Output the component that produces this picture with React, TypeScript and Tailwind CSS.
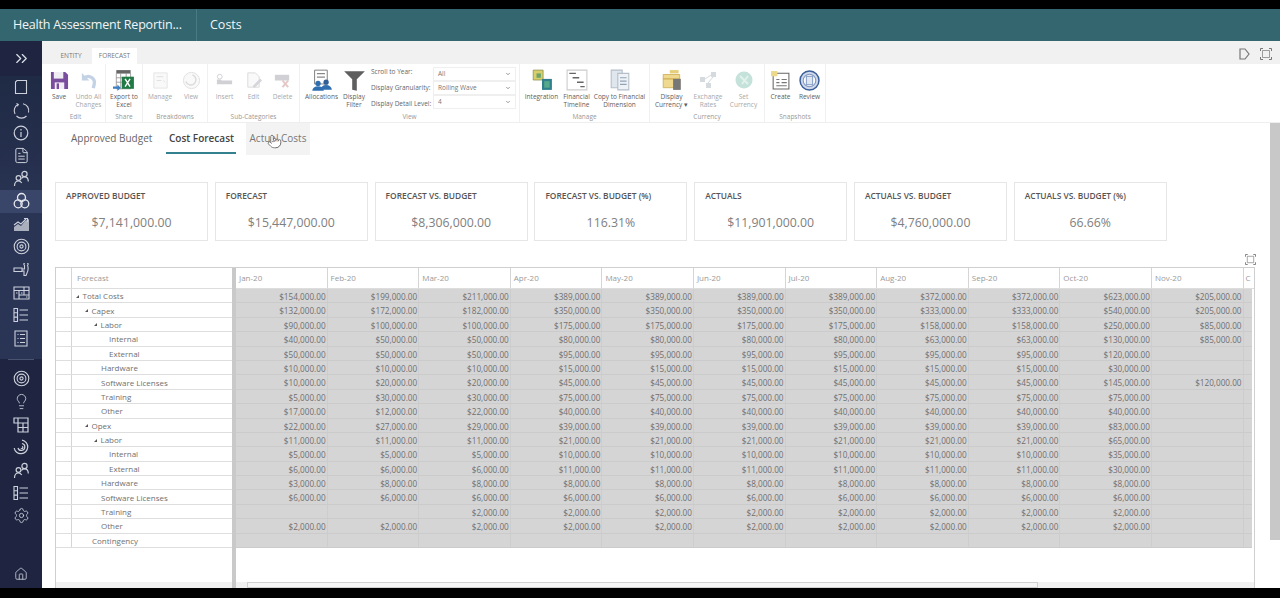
import {
  ChevronsRight,
  Lightbulb,
  Settings,
  Home,
  Pointer,
  ChevronDown,
  FileText,
} from 'lucide-react';
import type { ReactNode } from 'react';

const FONT = "font-['Open_Sans','Noto_Sans',sans-serif]";

const cards = [
  { label: 'APPROVED BUDGET', value: '$7,141,000.00' },
  { label: 'FORECAST', value: '$15,447,000.00' },
  { label: 'FORECAST VS. BUDGET', value: '$8,306,000.00' },
  { label: 'FORECAST VS. BUDGET (%)', value: '116.31%' },
  { label: 'ACTUALS', value: '$11,901,000.00' },
  { label: 'ACTUALS VS. BUDGET', value: '$4,760,000.00' },
  { label: 'ACTUALS VS. BUDGET (%)', value: '66.66%' },
];

const months = ['Jan-20', 'Feb-20', 'Mar-20', 'Apr-20', 'May-20', 'Jun-20', 'Jul-20', 'Aug-20', 'Sep-20', 'Oct-20', 'Nov-20'];

// values in thousands, 0 = empty cell
const rows: { name: string; indent: string; open?: boolean; v: number[] }[] = [
  { name: 'Total Costs', indent: 'pl-[4px]', open: true, v: [154, 199, 211, 389, 389, 389, 389, 372, 372, 623, 205] },
  { name: 'Capex', indent: 'pl-[13px]', open: true, v: [132, 172, 182, 350, 350, 350, 350, 333, 333, 540, 205] },
  { name: 'Labor', indent: 'pl-[22px]', open: true, v: [90, 100, 100, 175, 175, 175, 175, 158, 158, 250, 85] },
  { name: 'Internal', indent: 'pl-[37px]', v: [40, 50, 50, 80, 80, 80, 80, 63, 63, 130, 85] },
  { name: 'External', indent: 'pl-[37px]', v: [50, 50, 50, 95, 95, 95, 95, 95, 95, 120, 0] },
  { name: 'Hardware', indent: 'pl-[29px]', v: [10, 10, 10, 15, 15, 15, 15, 15, 15, 30, 0] },
  { name: 'Software Licenses', indent: 'pl-[29px]', v: [10, 20, 20, 45, 45, 45, 45, 45, 45, 145, 120] },
  { name: 'Training', indent: 'pl-[29px]', v: [5, 30, 30, 75, 75, 75, 75, 75, 75, 75, 0] },
  { name: 'Other', indent: 'pl-[29px]', v: [17, 12, 22, 40, 40, 40, 40, 40, 40, 40, 0] },
  { name: 'Opex', indent: 'pl-[13px]', open: true, v: [22, 27, 29, 39, 39, 39, 39, 39, 39, 83, 0] },
  { name: 'Labor', indent: 'pl-[22px]', open: true, v: [11, 11, 11, 21, 21, 21, 21, 21, 21, 65, 0] },
  { name: 'Internal', indent: 'pl-[37px]', v: [5, 5, 5, 10, 10, 10, 10, 10, 10, 35, 0] },
  { name: 'External', indent: 'pl-[37px]', v: [6, 6, 6, 11, 11, 11, 11, 11, 11, 30, 0] },
  { name: 'Hardware', indent: 'pl-[29px]', v: [3, 8, 8, 8, 8, 8, 8, 8, 8, 8, 0] },
  { name: 'Software Licenses', indent: 'pl-[29px]', v: [6, 6, 6, 6, 6, 6, 6, 6, 6, 6, 0] },
  { name: 'Training', indent: 'pl-[29px]', v: [0, 0, 2, 2, 2, 2, 2, 2, 2, 2, 0] },
  { name: 'Other', indent: 'pl-[29px]', v: [2, 2, 2, 2, 2, 2, 2, 2, 2, 2, 0] },
  { name: 'Contingency', indent: 'pl-[20px]', v: [0, 0, 0, 0, 0, 0, 0, 0, 0, 0, 0] },
];

function Svg({ children, size = 20 }: { children: ReactNode; size?: number }) {
  return (
    <svg width={size} height={size} viewBox="0 0 20 20" fill="none">
      {children}
    </svg>
  );
}

const STROKE = '#ccd1dc';

function SideIcon({ children, active }: { children: ReactNode; active?: boolean }) {
  return <div className={`h-[22.8px] flex items-center justify-center ${active ? 'bg-[#3a4669]' : ''}`}>{children}</div>;
}

function TargetIcon() {
  return (
    <svg width="17" height="17" viewBox="0 0 17 17" fill="none" stroke={STROKE} strokeWidth="1.1">
      <circle cx="8.5" cy="8.5" r="7.3" />
      <circle cx="8.5" cy="8.5" r="4.4" />
      <circle cx="8.5" cy="8.5" r="1.6" />
    </svg>
  );
}

function PeopleIcon() {
  return (
    <svg width="17" height="17" viewBox="0 0 17 17" fill="none" stroke={STROKE} strokeWidth="1.2">
      <circle cx="11.5" cy="4" r="2.6" />
      <circle cx="5.5" cy="8" r="2.4" />
      <path d="M1.5 16c0-3 1.5-5 4-5 1.5 0 2.5.7 3.2 2M8.5 8.5c.6-1 1.6-1.7 3-1.7 2.5 0 3.8 2 3.8 4.7" />
    </svg>
  );
}

function ListIcon() {
  return (
    <svg width="16" height="16" viewBox="0 0 16 16" fill="none" stroke={STROKE} strokeWidth="1.1">
      <path d="M1 1.5h3.5v13H1zM1 5.8h3.5M1 10.1h3.5M6.5 3H15M6.5 8H15M6.5 13H15" />
    </svg>
  );
}

function Sidebar() {
  return (
    <aside className="w-[42px] shrink-0 flex flex-col bg-[#1f2540] pt-[6px]">
      <div className="h-[22px] flex items-center justify-center">
        <ChevronsRight className="h-[19px] w-[19px] text-[#dde1ea]" strokeWidth={1.5} />
      </div>
      <div className="mt-[7px] pb-[9px] bg-gradient-to-b from-[#1f2a45] via-[#2a3454] to-[#2a3454]">
        <SideIcon>
          <svg width="14" height="16" viewBox="0 0 14 16" fill="none" stroke={STROKE} strokeWidth="1.1">
            <path d="M3 1.5h9.5v13h-11V3z" />
          </svg>
        </SideIcon>
        <SideIcon>
          <svg width="17" height="17" viewBox="0 0 17 17" fill="none" stroke={STROKE} strokeWidth="1.1">
            <path d="M5 2.5A7 7 0 0 0 2 12M3.5 14a7 7 0 0 0 10 0M15.5 10.5A7 7 0 0 0 10 1.7" />
            <path d="M3.5 1.5l1.8 1-1 1.8" />
          </svg>
        </SideIcon>
        <SideIcon>
          <svg width="16" height="16" viewBox="0 0 16 16" fill="none" stroke={STROKE} strokeWidth="1.2">
            <circle cx="8" cy="8" r="6.8" />
            <path d="M8 7v5M8 4v1.5" />
          </svg>
        </SideIcon>
        <SideIcon><FileText className="h-[17px] w-[17px] text-[#ccd1dc]" strokeWidth={1.4} /></SideIcon>
        <SideIcon><PeopleIcon /></SideIcon>
        <SideIcon active>
          <svg width="17" height="18" viewBox="0 0 17 18" fill="none" stroke="#e6e9f0" strokeWidth="1.3">
            <circle cx="8.5" cy="5.5" r="4" />
            <circle cx="5.2" cy="11.8" r="4" />
            <circle cx="11.8" cy="11.8" r="4" />
          </svg>
        </SideIcon>
        <SideIcon>
          <svg width="17" height="15" viewBox="0 0 17 15" fill="none">
            <path d="M1 14v-4l4-3 3 2 4-5 4-2v12z" fill="#a9afbd" />
            <path d="M1 8l4-3 3 2 5-5M11 1.5h3.5V5" stroke={STROKE} strokeWidth="1.1" />
          </svg>
        </SideIcon>
        <SideIcon><TargetIcon /></SideIcon>
        <SideIcon>
          <svg width="17" height="14" viewBox="0 0 17 14" fill="none" stroke={STROKE} strokeWidth="1.1">
            <path d="M1 5h8v3.5H1zM9 6h2.5V2.5a2 2 0 1 1 3 0c.8 1 1 5-.5 7.5l-1 2.5H11V8H9" />
          </svg>
        </SideIcon>
        <SideIcon>
          <svg width="17" height="14" viewBox="0 0 17 14" fill="none" stroke={STROKE} strokeWidth="1.1">
            <path d="M1 1h15v12H1zM1 4.500h15M6 4.500V13M11 1v8M6 9h10M3 7h1.500M8 7h1.500M13 11h1.500" />
          </svg>
        </SideIcon>
        <SideIcon><ListIcon /></SideIcon>
        <SideIcon>
          <svg width="14" height="17" viewBox="0 0 14 17" fill="none" stroke={STROKE} strokeWidth="1.1">
            <path d="M1 1h12v15H1zM3.5 4.5h1M6 4.5h5M3.5 8.5h1M6 8.5h5M3.5 12.5h1M6 12.5h5" />
          </svg>
        </SideIcon>
      </div>
      <div className="mx-[8px] h-px bg-[#4a5470]" />
      <div className="mt-[8px]">
        <SideIcon><TargetIcon /></SideIcon>
        <SideIcon><Lightbulb className="h-[17px] w-[17px] text-[#ccd1dc]" strokeWidth={1.2} /></SideIcon>
        <SideIcon>
          <svg width="16" height="16" viewBox="0 0 16 16" fill="none" stroke={STROKE} strokeWidth="1.2">
            <path d="M1 1h14v14H5V6H1zM1 6h14M5 6V1M10 6v9M5 10.5h10" />
          </svg>
        </SideIcon>
        <SideIcon>
          <svg width="16" height="16" viewBox="0 0 16 16" fill="none" stroke={STROKE} strokeWidth="1.2">
            <path d="M9 1.2A6.8 6.8 0 1 1 1.2 9M9 4.5A3.5 3.5 0 1 1 5 9M9 7.5A1 1 0 1 1 8 9" />
          </svg>
        </SideIcon>
        <SideIcon><PeopleIcon /></SideIcon>
        <SideIcon><ListIcon /></SideIcon>
        <SideIcon><Settings className="h-[17px] w-[17px] text-[#ccd1dc]" strokeWidth={1.2} /></SideIcon>
      </div>
      <div className="mt-auto mb-[7px] flex justify-center">
        <Home className="h-[14px] w-[14px] text-[#ccd1dc]" strokeWidth={1.4} />
      </div>
    </aside>
  );
}

function RibbonItem({ w, icon, label, faded }: { w: string; icon: ReactNode; label: ReactNode; faded?: boolean }) {
  return (
    <div className={`${w} shrink-0 flex flex-col items-center`}>
      <div className={`h-[24px] flex items-center justify-center ${faded ? 'opacity-30' : ''}`}>{icon}</div>
      <div className={`text-center text-[6.5px] leading-[7.5px] pt-[1px] ${faded ? 'text-[#a8a8a8]' : 'text-[#606060]'}`}>{label}</div>
    </div>
  );
}

function RibbonGroup({ w, label, children }: { w: string; label: string; children: ReactNode }) {
  return (
    <div className={`${w} shrink-0 flex flex-col border-r border-[#f0f0f0]`}>
      <div className="h-[45px] flex justify-center pt-[4px]">{children}</div>
      <div className="text-center text-[6.5px] leading-[8px] pt-[4px] text-[#999]">{label}</div>
    </div>
  );
}

function Select({ text }: { text: string }) {
  return (
    <div className="h-[16px] w-[83px] border border-[#efefef] flex items-center justify-between px-[4px] text-[6.5px] text-[#777]">
      {text}
      <ChevronDown className="h-[6px] w-[6px] text-[#777]" strokeWidth={3} />
    </div>
  );
}

function Ribbon() {
  return (
    <div className="h-[59px] shrink-0 flex pl-[4px] bg-white border-b border-[#eeeeee]">
      <RibbonGroup w="w-[60px]" label="Edit">
        <RibbonItem w="w-[26px]" label="Save" icon={
          <Svg size={19}>
            <path d="M1 1h15l3 3v15H1z" fill="#7a4e9e" />
            <path d="M4 1h10v7H4z" fill="#f1edf5" />
            <path d="M5 12h10v7H5z" fill="#f1edf5" />
            <path d="M7 13h2.5v6H7z" fill="#7a4e9e" />
          </Svg>
        } />
        <RibbonItem w="w-[33px]" faded label={<>Undo All<br />Changes</>} icon={
          <Svg size={19}>
            <path d="M3 2v8h8z" fill="#3f6db0" />
            <path d="M6 7a6.5 6.5 0 0 1 10 7l-1 4" stroke="#3f6db0" strokeWidth="3.5" />
          </Svg>
        } />
      </RibbonGroup>
      <RibbonGroup w="w-[37px]" label="Share">
        <RibbonItem w="w-[36px]" label={<>Export to<br />Excel</>} icon={
          <Svg size={22}>
            <path d="M3 1h13v3H3z" fill="#666" />
            <path d="M3 4h13v14H3zM7 4v14M12 4v4M3 8h9M3 12h5" fill="#fff" stroke="#888" strokeWidth="0.7" />
            <path d="M8 7h11v11H8z" fill="#1f7a44" />
            <path d="M11 9l4.5 7M15.5 9L11 16" stroke="#fff" strokeWidth="1.3" />
            <path d="M0 16h4v-2l3 3-3 3v-2H0z" fill="#3b7fc4" />
          </Svg>
        } />
      </RibbonGroup>
      <RibbonGroup w="w-[65px]" label="Breakdowns">
        <RibbonItem w="w-[32px]" faded label="Manage" icon={
          <Svg size={19}><path d="M3 2h14v16H3z" fill="#eee" stroke="#aaa" /><path d="M6 6h7M6 10h5M13 10l2 2" stroke="#999" /></Svg>
        } />
        <RibbonItem w="w-[30px]" faded label="View" icon={
          <Svg size={19}><circle cx="10" cy="10" r="8.5" fill="#eee" stroke="#999" /><path d="M11 4a5.5 5.5 0 1 1-7 7" stroke="#888" strokeWidth="1.5" /></Svg>
        } />
      </RibbonGroup>
      <RibbonGroup w="w-[92px]" label="Sub-Categories">
        <RibbonItem w="w-[29px]" faded label="Insert" icon={
          <Svg size={19}><circle cx="5" cy="6" r="2.5" stroke="#667" /><path d="M2 9h4l1 1h11v4H2z" fill="#667" /></Svg>
        } />
        <RibbonItem w="w-[29px]" faded label="Edit" icon={
          <Svg size={19}><path d="M4 2h8l4 4v11H4z" fill="#eee" stroke="#888" /><path d="M9 16l8-8 2 2-8 8z" fill="#778" /></Svg>
        } />
        <RibbonItem w="w-[29px]" faded label="Delete" icon={
          <Svg size={19}><path d="M2 4h15v6H2z" fill="#667" /><path d="M10 10l6 7M16 10l-6 7" stroke="#a44" strokeWidth="2" /></Svg>
        } />
      </RibbonGroup>
      <RibbonGroup w="w-[220px]" label="View">
        <RibbonItem w="w-[37px]" label="Allocations" icon={
          <Svg size={23}>
            <path d="M4 1h11v12H4z" fill="#fff" stroke="#777" strokeWidth="0.8" />
            <path d="M6 4h7M6 7h7" stroke="#888" />
            <circle cx="7" cy="12.5" r="2.3" fill="#2f6fb0" />
            <circle cx="14" cy="11.5" r="2.3" fill="#2f5f96" />
            <path d="M2 19a5 4 0 0 1 10 0zM9 18a5 4 0 0 1 10 0z" fill="#2f6fb0" />
          </Svg>
        } />
        <RibbonItem w="w-[28px]" label={<>Display<br />Filter</>} icon={
          <Svg size={23}><path d="M1 2h18l-7 7v10l-4-1V9z" fill="#5f5f5f" /></Svg>
        } />
        <div className="w-[65px] shrink-0 pl-[3px] flex flex-col gap-[8px] text-[6.5px] leading-[8px] text-[#666] whitespace-nowrap overflow-hidden">
          <span>Scroll to Year:</span>
          <span>Display Granularity:</span>
          <span>Display Detail Level:</span>
        </div>
        <div className="flex flex-col -mt-[1px]">
          <Select text="All" />
          <Select text="Rolling Wave" />
          <Select text="4" />
        </div>
      </RibbonGroup>
      <RibbonGroup w="w-[130px]" label="Manage">
        <RibbonItem w="w-[36px]" label="Integration" icon={
          <Svg size={22}>
            <path d="M2 1h9v9H2z" fill="#d9cf6a" stroke="#8a8f4a" strokeWidth="0.7" />
            <path d="M5 4h4v4H5z" fill="#6ca46c" />
            <path d="M10 9h9v10h-9z" fill="#2f7f8c" />
            <path d="M12 11h5v6h-5z" fill="#56a88a" />
          </Svg>
        } />
        <RibbonItem w="w-[34px]" label={<>Financial<br />Timeline</>} icon={
          <Svg size={22}>
            <path d="M1 1h18v18H1z" fill="#fff" stroke="#ccc" />
            <path d="M3 4h6M6 8h6M10 12h6M13 16h4" stroke="#666" strokeWidth="1.3" />
          </Svg>
        } />
        <RibbonItem w="w-[52px]" label={<>Copy to Financial<br />Dimension</>} icon={
          <Svg size={22}>
            <path d="M2 1h10v16H2z" fill="#dfe6ee" stroke="#b5bec9" />
            <path d="M8 4h10v15H8z" fill="#eef2f6" stroke="#b5bec9" />
            <path d="M10 8h6M10 11h6M10 14h6" stroke="#8fa2b6" />
          </Svg>
        } />
      </RibbonGroup>
      <RibbonGroup w="w-[115px]" label="Currency">
        <RibbonItem w="w-[38px]" label={<>Display<br />Currency ▾</>} icon={
          <Svg size={22}>
            <path d="M8 1h8v3H8z" fill="#e6cf7a" />
            <path d="M2 5h15v12H2z" fill="#efd98f" stroke="#c9a94d" strokeWidth="0.7" />
            <path d="M2 9h15" stroke="#c9a94d" />
            <path d="M11 9h7v10h-7z" fill="#777" />
          </Svg>
        } />
        <RibbonItem w="w-[35px]" faded label={<>Exchange<br />Rates</>} icon={
          <Svg size={20}>
            <path d="M2 7h5v5H2zM13 2h5v5h-5zM8 13h5v5H8z" fill="#789" />
            <path d="M7 9l6-4M10 13l5-6" stroke="#789" />
          </Svg>
        } />
        <RibbonItem w="w-[36px]" faded label={<>Set<br />Currency</>} icon={
          <Svg size={20}><circle cx="10" cy="10" r="8.5" fill="#3f9f86" /><path d="M6 6l8 8M14 6l-6 8" stroke="#9fd6c6" strokeWidth="2" /></Svg>
        } />
      </RibbonGroup>
      <RibbonGroup w="w-[61px]" label="Snapshots">
        <RibbonItem w="w-[29px]" label="Create" icon={
          <Svg size={21}>
            <path d="M3 3h15v15H3z" fill="#fff" stroke="#666" />
            <path d="M1 1h6v5H1z" fill="#ecd98c" />
            <path d="M6 9h3M11 9h5M6 12h3M11 12h5M6 15h10" stroke="#777" />
          </Svg>
        } />
        <RibbonItem w="w-[29px]" label="Review" icon={
          <Svg size={21}>
            <circle cx="10" cy="10" r="9" fill="#cfd9ea" stroke="#3b5f9a" strokeWidth="1.4" />
            <circle cx="10" cy="10" r="6" fill="#fff" stroke="#7f97c0" />
            <path d="M7 6h6v8H7z" fill="#dfe6f1" stroke="#5c7cb0" strokeWidth="0.7" />
          </Svg>
        } />
      </RibbonGroup>
    </div>
  );
}

function FocusIcon({ size }: { size: number }) {
  return (
    <svg width={size} height={size} viewBox="0 0 12 12" fill="none" stroke="#777" strokeWidth="1">
      <path d="M.5 3V.5H3M9 .5h2.500V3M11.500 9v2.500H9M3 11.500H.5V9" />
      <path d="M2.500 2.500h7v7h-7z" strokeWidth="0.7" />
    </svg>
  );
}

function Triangle() {
  return <span className="mr-[3.5px] inline-block h-0 w-0 border-l-[3.5px] border-b-[3.5px] border-l-transparent border-b-[#555]" />;
}

function ForecastGrid() {
  return (
    <div className="relative h-[321px] mr-[15px] ml-[13px] border-l border-r border-t border-[#cfcfcf] flex overflow-hidden">
      {/* left pane */}
      <div className="w-[176px] shrink-0 flex flex-col">
        <div className="flex h-[21px] border-b border-[#dddddd]">
          <div className="w-[16px] border-r border-[#d5d5d5]" />
          <div className="pl-[5px] leading-[19px] text-[8px] text-[#9a9a9a]">Forecast</div>
        </div>
        {rows.map((r, i) => (
          <div key={i} className="flex h-[14.4px] border-b border-[#dedede]">
            <div className="w-[16px] shrink-0 border-r border-[#d5d5d5]" />
            <div className={`${r.indent} flex items-center pt-[1px] whitespace-nowrap text-[8px] text-[#707070]`}>
              {r.open && <Triangle />}
              {r.name}
            </div>
          </div>
        ))}
        <div className="mt-auto h-[6px] bg-[#f1f1f1]" />
      </div>
      {/* splitter */}
      <div className="w-[4px] shrink-0 bg-[#c9c9c9]" />
      {/* right pane */}
      <div className="flex-1 min-w-0 flex flex-col overflow-hidden">
        <div className="flex h-[21px] border-b border-[#dddddd] shrink-0">
          {months.map((m) => (
            <div key={m} className="w-[91.6px] shrink-0 border-r border-[#d5d5d5] pl-[3px] leading-[19px] text-[8px] text-[#9a9a9a]">{m}</div>
          ))}
          <div className="pl-[2px] leading-[19px] text-[8px] text-[#9a9a9a]">C</div>
        </div>
        <div className="mr-[2px] bg-[#d6d5d6]">
          {rows.map((r, i) => (
            <div key={i} className="flex h-[14.4px] border-b border-[#cbcbcb]">
              {r.v.map((n, j) => (
                <div key={j} className="w-[91.6px] shrink-0 border-r border-[#cdcdcd] pr-[1px] text-right text-[8.2px] leading-[15px] text-[#6f6f6f]">
                  {n ? `$${n},000.00` : ''}
                </div>
              ))}
            </div>
          ))}
        </div>
        <div className="mt-auto h-[6px] bg-[#f1f1f1] pl-[11px] pr-[216px]">
          <div className="h-full border border-[#d0d0d0] bg-[#f6f6f6]" />
        </div>
      </div>
    </div>
  );
}

export default function App() {
  return (
    <div className={`${FONT} h-[598px] w-[1280px] overflow-hidden bg-black pt-[9px] pb-[10px] flex flex-col`}>
      <header className="h-[32px] shrink-0 flex items-center bg-[#33666f] text-[#f1f5f6]">
        <div className="h-full w-[197px] border-r border-[#4a7a83] pl-[13px] pt-[1px] flex items-center text-[12.5px] tracking-[-0.2px] whitespace-nowrap">
          Health Assessment Reportin...
        </div>
        <div className="pl-[13px] pt-[1px] text-[12.5px]">Costs</div>
      </header>
      <div className="flex-1 min-h-0 flex">
        <Sidebar />
        <main className="relative flex-1 min-w-0 flex flex-col bg-white overflow-hidden">
          <div className="h-[23px] shrink-0 bg-[#f1f1f1] flex items-end pl-[8px] text-[6.5px] text-[#777]">
            <div className="w-[42px] h-[16px] flex items-center justify-center">ENTITY</div>
            <div className="w-[45px] h-[16px] bg-white flex items-center justify-center">FORECAST</div>
            <div className="ml-auto pr-[8px] pb-[4px] flex items-center gap-[10px]">
              <svg width="11" height="12" viewBox="0 0 11 12" fill="none" stroke="#777" strokeWidth="1.2">
                <path d="M1 1h5l4 5-4 5H1z" />
              </svg>
              <FocusIcon size={12} />
            </div>
          </div>
          <Ribbon />
          <div className="flex-1 min-h-0 flex">
            <div className="flex-1 min-w-0 flex flex-col">
              {/* sub tabs */}
              <nav className="h-[32px] shrink-0 flex items-stretch pl-[29px] text-[10px]">
                <div className="w-[95px] pt-[8px] text-[#666] whitespace-nowrap">Approved Budget</div>
                <div className="relative w-[80px] pt-[8px] pl-[3px] font-semibold text-[#444] whitespace-nowrap">
                  Cost Forecast
                  <div className="absolute bottom-[1px] left-0 right-[10px] h-[2px] bg-[#33808f]" />
                </div>
                <div className="w-[64px] pt-[8px] text-center bg-[#f3f3f3] text-[#777] whitespace-nowrap">Actual Costs</div>
              </nav>
              {/* summary cards */}
              <div className="mt-[27px] pl-[13px] flex gap-[6.8px]">
                {cards.map((c) => (
                  <div key={c.label} className="h-[59px] w-[153px] shrink-0 border border-[#e6e6e6] px-[10px] pt-[7px]">
                    <div className="text-[8.4px] leading-[12px] font-semibold text-[#555] whitespace-nowrap">{c.label}</div>
                    <div className="mt-[12.5px] text-center text-[12.3px] leading-[16px] text-[#808080]">{c.value}</div>
                  </div>
                ))}
              </div>
              <div className="h-[26px] pr-[14px] flex items-end justify-end pb-[2px]">
                <FocusIcon size={11} />
              </div>
              <ForecastGrid />
            </div>
            <div className="w-[10px] shrink-0 flex flex-col">
              <div className="h-[417px] bg-[#c8c8c8]" />
            </div>
          </div>
          <Pointer className="absolute left-[225px] top-[93px] h-[15px] w-[15px] text-[#555] fill-white" strokeWidth={1.2} />
        </main>
      </div>
    </div>
  );
}
